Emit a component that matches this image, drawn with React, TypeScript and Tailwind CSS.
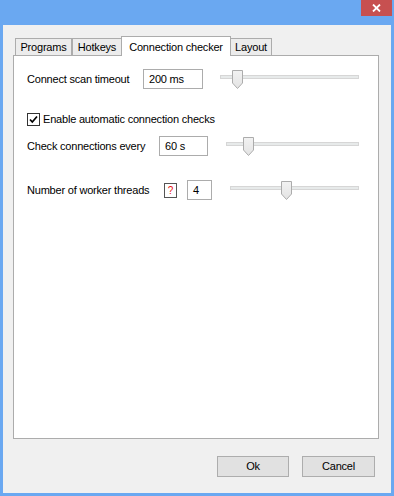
import React from 'react';

function Slider({ width, pos }: { width: number; pos: number }) {
  return (
    <div className="relative h-[19px]" style={{ width }}>
      <div className="absolute left-0 right-0 top-[5px] h-[4px] bg-[#e7eaea] border border-[#d6d6d6]" />
      <svg
        className="absolute top-0"
        style={{ left: pos }}
        width="11"
        height="19"
        viewBox="0 0 11 19"
      >
        <defs>
          <linearGradient id="thumbfill" x1="0" y1="0" x2="0" y2="1">
            <stop offset="0" stopColor="#f2f2f2" />
            <stop offset="1" stopColor="#e3e3e3" />
          </linearGradient>
        </defs>
        <path
          d="M0.5 0.5 H10.5 V13 L5.5 18.5 L0.5 13 Z"
          fill="url(#thumbfill)"
          stroke="#acacac"
        />
      </svg>
    </div>
  );
}

function Field({ value, width }: { value: string; width: number }) {
  return (
    <div
      className="h-[20px] border border-[#acacac] bg-white pl-[5px] flex items-center"
      style={{ width }}
    >
      {value}
    </div>
  );
}

export default function App() {
  const font = "font-['Segoe_UI','Liberation_Sans',Arial,sans-serif] text-[11px] tracking-[-0.2px] text-black";

  return (
    <div className={`w-[394px] h-[496px] bg-[#6aa8f1] flex flex-col ${font}`}>
      {/* title bar */}
      <div className="h-[25px] flex justify-end items-start pr-[2px]">
        <div className="w-[31px] h-[16px] bg-[#c75050] flex items-center justify-center">
          <svg width="9" height="8" viewBox="0 0 9 8">
            <path d="M1 0.5 L8 7.5 M8 0.5 L1 7.5" stroke="#fff" strokeWidth="1.8" />
          </svg>
        </div>
      </div>

      {/* client area */}
      <div className="flex-1 mx-[3px] mb-[3px] bg-[#f0f0f0] flex flex-col pt-[11px] pb-[16px]">
        {/* tabs */}
        <div className="h-[19px] flex items-end ml-[12px]">
          <div className="w-[57px] h-[17px] border border-b-0 border-[#acacac] bg-[#ececec] flex items-center justify-center pt-px">
            Programs
          </div>
          <div className="w-[50px] h-[17px] border border-b-0 border-[#acacac] bg-[#ececec] flex items-center justify-center pt-px">
            Hotkeys
          </div>
          <div className="relative z-10 -ml-px -mb-px w-[110px] h-[20px] border border-b-0 border-[#acacac] bg-white flex items-start justify-center pt-[2px]">
            Connection checker
          </div>
          <div className="-ml-px w-[42px] h-[17px] border border-b-0 border-[#acacac] bg-[#ececec] flex items-center justify-center pt-px">
            Layout
          </div>
        </div>

        {/* pane */}
        <div className="flex-1 ml-[10px] mr-[12px] border border-[#acacac] bg-white pl-[13px] flex flex-col">
          <div className="mt-[13px] h-[20px] flex items-center">
            <div className="w-[116px]">Connect scan timeout</div>
            <Field value="200 ms" width={60} />
            <div className="ml-[17px]">
              <Slider width={139} pos={12} />
            </div>
          </div>

          <div className="mt-[24px] h-[13px] flex items-center">
            <div className="w-[13px] h-[13px] border border-[#333] bg-white flex items-center justify-center">
              <svg width="9" height="9" viewBox="0 0 9 9">
                <path d="M1 4.5 L3.3 7 L8 1.5" fill="none" stroke="#000" strokeWidth="1.7" />
              </svg>
            </div>
            <div className="ml-[3px]">Enable automatic connection checks</div>
          </div>

          <div className="mt-[10px] h-[20px] flex items-center">
            <div className="w-[132px]">Check connections every</div>
            <Field value="60 s" width={49} />
            <div className="ml-[18px]">
              <Slider width={133} pos={17} />
            </div>
          </div>

          <div className="mt-[24px] h-[20px] flex items-center">
            <div className="w-[137px]">Number of worker threads</div>
            <div className="w-[13px] h-[15px] border border-[#555555] flex items-center justify-center">
              <span className="text-[#e81010] font-['Liberation_Sans',sans-serif] text-[10px]">?</span>
            </div>
            <div className="ml-[10px]">
              <Field value="4" width={25} />
            </div>
            <div className="ml-[18px]">
              <Slider width={129} pos={51} />
            </div>
          </div>
        </div>

        {/* buttons */}
        <div className="mt-[17px] h-[21px] flex justify-end gap-[13px] pr-[16px]">
          <button className="w-[72px] h-[21px] bg-[#e1e1e1] border border-[#adadad]">Ok</button>
          <button className="w-[73px] h-[21px] bg-[#e1e1e1] border border-[#adadad]">Cancel</button>
        </div>
      </div>
    </div>
  );
}
